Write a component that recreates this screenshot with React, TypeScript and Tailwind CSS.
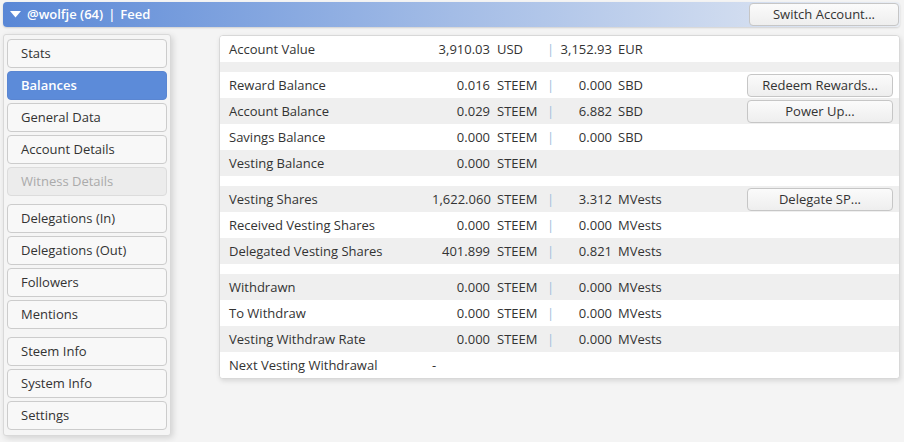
import { FunctionComponent } from "react";

type Row =
  | { kind: "spacer" }
  | {
      kind: "row";
      label: string;
      v1?: string;
      u1?: string;
      v2?: string;
      u2?: string;
      dash?: boolean;
      action?: string;
    };

const rows: Row[] = [
  { kind: "row", label: "Account Value", v1: "3,910.03", u1: "USD", v2: "3,152.93", u2: "EUR" },
  { kind: "spacer" },
  { kind: "row", label: "Reward Balance", v1: "0.016", u1: "STEEM", v2: "0.000", u2: "SBD", action: "Redeem Rewards..." },
  { kind: "row", label: "Account Balance", v1: "0.029", u1: "STEEM", v2: "6.882", u2: "SBD", action: "Power Up..." },
  { kind: "row", label: "Savings Balance", v1: "0.000", u1: "STEEM", v2: "0.000", u2: "SBD" },
  { kind: "row", label: "Vesting Balance", v1: "0.000", u1: "STEEM" },
  { kind: "spacer" },
  { kind: "row", label: "Vesting Shares", v1: "1,622.060", u1: "STEEM", v2: "3.312", u2: "MVests", action: "Delegate SP..." },
  { kind: "row", label: "Received Vesting Shares", v1: "0.000", u1: "STEEM", v2: "0.000", u2: "MVests" },
  { kind: "row", label: "Delegated Vesting Shares", v1: "401.899", u1: "STEEM", v2: "0.821", u2: "MVests" },
  { kind: "spacer" },
  { kind: "row", label: "Withdrawn", v1: "0.000", u1: "STEEM", v2: "0.000", u2: "MVests" },
  { kind: "row", label: "To Withdraw", v1: "0.000", u1: "STEEM", v2: "0.000", u2: "MVests" },
  { kind: "row", label: "Vesting Withdraw Rate", v1: "0.000", u1: "STEEM", v2: "0.000", u2: "MVests" },
  { kind: "row", label: "Next Vesting Withdrawal", v1: "-", dash: true },
];

const groups = [
  ["Stats", "Balances", "General Data", "Account Details", "Witness Details"],
  ["Delegations (In)", "Delegations (Out)", "Followers", "Mentions"],
  ["Steem Info", "System Info", "Settings"],
];

const NavButton: FunctionComponent<{ label: string }> = ({ label }) => {
  if (label === "Balances") {
    return (
      <div className="h-[29px] flex items-center pl-[13px] rounded-[4px] border border-[#5a86d2] bg-[#5c8bd9] text-white font-semibold">
        {label}
      </div>
    );
  }
  if (label === "Witness Details") {
    return (
      <div className="h-[29px] flex items-center pl-[13px] rounded-[4px] border border-[#dcdcdc] bg-[#ececec] text-[#aaaaaa]">
        {label}
      </div>
    );
  }
  return (
    <div className="h-[29px] flex items-center pl-[13px] rounded-[4px] border border-[#cccccc] bg-[#f8f8f8] text-[#333333]">
      {label}
    </div>
  );
};

const ActionButton: FunctionComponent<{ label: string }> = ({ label }) => (
  <div className="ml-auto mr-[6px] w-[146px] h-[23px] flex items-center justify-center rounded-[4px] border border-[#c6c6c6] bg-gradient-to-b from-[#fbfbfb] to-[#eeeeee] text-[#333333]">
    {label}
  </div>
);

const App: FunctionComponent = () => {
  return (
    <div className="w-[904px] h-[442px] overflow-hidden bg-[#f4f4f4] px-[3px] pt-[2px] text-[13px] text-[#333333] font-['Open_Sans',sans-serif] leading-none">
      <div className="h-[25px] w-[897px] flex items-center rounded-[4px] bg-gradient-to-r from-[#5987d6] via-[#a3bce6] to-[#e9edf4] shadow-[0_1px_2px_rgba(0,0,0,0.15)]">
        <svg width="11" height="7" viewBox="0 0 11 7" className="ml-[7px] mr-[6px]">
          <polygon points="0,0 11,0 5.5,6.5" fill="#ffffff" />
        </svg>
        <span className="text-white font-semibold">@wolfje (64)</span>
        <span className="text-white font-semibold mx-[5px]">|</span>
        <span className="text-white font-semibold">Feed</span>
        <div className="ml-auto mr-[1px] w-[150px] h-[23px] flex items-center justify-center rounded-[4px] border border-[#c6c6c6] bg-gradient-to-b from-[#fbfbfb] to-[#eeeeee] text-[#333333]">
          Switch Account...
        </div>
      </div>

      <div className="flex items-start mt-[7px]">
        <div className="w-[168px] flex flex-col gap-[8px] border border-[#d9d9d9] rounded-[3px] bg-[#f5f5f5] px-[3px] pt-[4px] pb-[5px] shadow-[2px_2px_6px_rgba(0,0,0,0.14)]">
          {groups.map((g, gi) => (
            <div key={gi} className="flex flex-col gap-[3px]">
              {g.map((label) => (
                <NavButton key={label} label={label} />
              ))}
            </div>
          ))}
        </div>

        <div className="ml-[48px] w-[681px] mt-[1px] border border-[#d8d8d8] rounded-[4px] bg-white overflow-hidden shadow-[1px_2px_5px_rgba(0,0,0,0.12)]">
          {rows.map((r, i) => {
            const stripe = i % 2 === 1 ? "bg-[#efefef]" : "bg-white";
            if (r.kind === "spacer") {
              return <div key={i} className={`h-[10px] ${stripe}`} />;
            }
            return (
              <div key={i} className={`h-[26px] flex items-center ${stripe}`}>
                <div className="w-[212px] pl-[9px]">{r.label}</div>
                {r.dash ? (
                  <div className="w-[58px] text-left">-</div>
                ) : (
                  <div className="w-[58px] text-right whitespace-nowrap">{r.v1}</div>
                )}
                <div className="w-[57px] pl-[7px]">{r.u1}</div>
                <div className="w-[10px] text-[#9fbddc]">{r.v2 ? "|" : ""}</div>
                <div className="w-[55px] text-right">{r.v2}</div>
                <div className="w-[70px] pl-[6px]">{r.u2}</div>
                {r.action && <ActionButton label={r.action} />}
              </div>
            );
          })}
        </div>
      </div>
    </div>
  );
};

export default App;
